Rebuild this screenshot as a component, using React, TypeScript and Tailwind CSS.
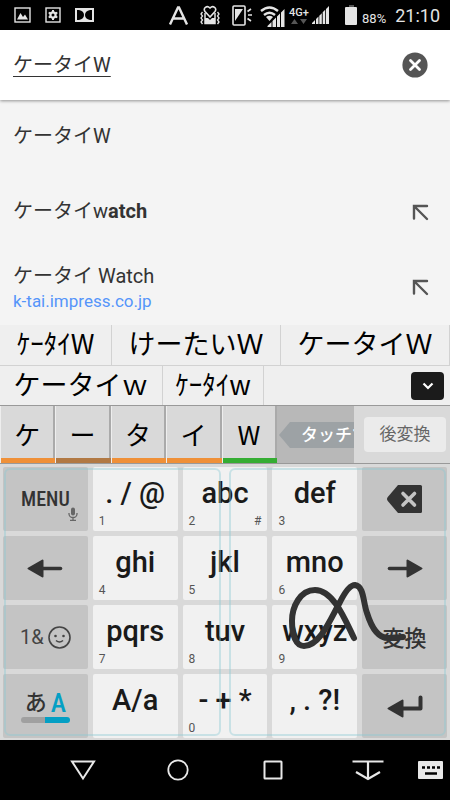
import type { ReactNode } from 'react';

interface Suggestion {
  text: string;
  match?: string;
  url?: string;
}

interface KeyDef {
  label: string;
  hint?: string;
  alt?: string;
}

const suggestions: Suggestion[] = [
  { text: 'ケータイW' },
  { text: 'ケータイw', match: 'atch' },
  { text: 'ケータイ Watch', url: 'k-tai.impress.co.jp' },
];

const segments = [
  { char: 'ケ', bar: 'bg-[#ef9038]' },
  { char: 'ー', bar: 'bg-[#b17944]' },
  { char: 'タ', bar: 'bg-[#ef9038]' },
  { char: 'イ', bar: 'bg-[#ef9038]' },
  { char: 'W', bar: 'bg-[#35ad33]' },
];

const keyRows: KeyDef[][] = [
  [{ label: '. / @', hint: '1' }, { label: 'abc', hint: '2', alt: '#' }, { label: 'def', hint: '3' }],
  [{ label: 'ghi', hint: '4' }, { label: 'jkl', hint: '5' }, { label: 'mno', hint: '6' }],
  [{ label: 'pqrs', hint: '7' }, { label: 'tuv', hint: '8' }, { label: 'wxyz', hint: '9' }],
  [{ label: 'A/a' }, { label: '- + *', hint: '0' }, { label: ', . ?!' }],
];

function StatusBar() {
  return (
    <header className="flex h-[30px] items-center justify-between bg-black pr-[10px] pl-[14px] text-[#e4e4e4]">
      <div className="flex items-center gap-[14px]">
        <svg width="17" height="16" viewBox="0 0 17 16" fill="none">
          <rect x="1" y="1" width="15" height="14" stroke="currentColor" strokeWidth="1.4" />
          <path d="M3 12.500 6.500 6l2.500 4L11 7.500l3 5z" fill="currentColor" />
        </svg>
        <svg width="16" height="16" viewBox="0 0 16 16" fill="none" stroke="currentColor">
          <rect x="1" y="1" width="14" height="14" strokeWidth="1.4" />
          <circle cx="8" cy="8" r="2.600" strokeWidth="2.200" />
          <path d="M8 3v2M8 11v2M3.700 5.500l1.700 1M10.600 9.500l1.700 1M3.700 10.500l1.700-1M10.600 6.500l1.700-1" strokeWidth="2" />
        </svg>
        <svg width="19" height="14" viewBox="0 0 19 14">
          <rect width="19" height="14" fill="currentColor" />
          <path d="M2 2h2q5 1 5 5t-5 5H2zM17 2h-2q-5 1-5 5t5 5h2z" fill="#000" />
        </svg>
      </div>

      <div className="flex items-center">
        <svg width="19" height="19" viewBox="0 0 19 19" fill="none" stroke="currentColor" strokeWidth="2.400">
          <path d="M1 18.500 9 1.500h1L18 18.500M4 12.500h11" />
        </svg>
        <svg className="ml-3" width="20" height="20" viewBox="0 0 20 20" fill="none" stroke="currentColor">
          <path d="M10 12 5 6.500C2.500 3 7 0 10 3c3-3 7.500 0 5 3.500z" strokeWidth="1.600" />
          <path d="M5 8v10.500h10V8" strokeWidth="1.500" />
          <path d="M5 18v-5h3l2 2 2-2h3v5z" fill="currentColor" stroke="none" />
          <path d="M2.500 7 1 9l1.500 2L1 13l1.500 2L1 17l1.500 2M17.500 7 19 9l-1.500 2 1.500 2-1.500 2 1.500 2-1.500 2" strokeWidth="1.300" />
        </svg>
        <svg className="ml-3" width="20" height="21" viewBox="0 0 20 21" fill="none" stroke="currentColor">
          <rect x="1" y="1" width="12" height="19" rx="1" strokeWidth="1.600" />
          <path d="M3 4h8L3 16z" fill="currentColor" stroke="none" />
          <path d="M15.500 6.500 19 4M16 10h4M15.500 13.500 19 16" strokeWidth="1.600" />
        </svg>
        <svg className="ml-2" width="25" height="23" viewBox="0 0 25 23">
          <path d="M1 7q8.500-7 17 0M4 11q5.500-4.500 11 0" fill="none" stroke="currentColor" strokeWidth="2.400" />
          <path d="m6 13 3.500 4 3.500-4q-3.500-2.500-7 0z" fill="currentColor" />
          <path d="M7.500 23v-1l4-4v5zM12.500 17l3.500-3.500V23h-3.500zM17 12.500 20 9.500V23h-3zM21 8.500 24.500 5v18H21z" fill="currentColor" />
        </svg>
        <div className="ml-1 flex w-5 flex-col items-center">
          <span className="text-[11px] leading-[12px] font-medium">4G+</span>
          <svg width="16" height="5" viewBox="0 0 16 5" fill="#555">
            <path d="M0 5 3.500 0 7 5zM9 0h7l-3.500 5z" />
          </svg>
        </div>
        <svg className="ml-[3px]" width="17" height="18" viewBox="0 0 17 18" fill="currentColor">
          <path d="M0 18v-1l3-3v4zM4 13l2.500-2.500V18H4zM7.300 9.700l2.500-2.500V18H7.300zM10.700 6.300l2.500-2.500V18h-2.500zM14 3l3-3v18h-3z" />
        </svg>
        <svg className="ml-4" width="13" height="20" viewBox="0 0 13 20">
          <path d="M4 0h5v3H4z" fill="#555" />
          <rect y="2" width="12" height="18" rx="1" fill="currentColor" />
        </svg>
        <span className="ml-1 pt-2 text-[13px] leading-4">88%</span>
        <span className="ml-[9px] pt-px text-[18px] leading-5">21:10</span>
      </div>
    </header>
  );
}

function SuggestionRow({ text, match, url }: Suggestion) {
  return (
    <li className="flex h-[75px] items-center justify-between pr-[21px] pl-[13px]">
      <a href="#" className={`flex flex-col text-[#333] ${url ? 'pt-px' : 'pb-1'}`}>
        <span className="text-[20px] leading-[26px]">
          {text}
          {match && <b className="font-bold">{match}</b>}
        </span>
        {url && <span className="text-[17px] leading-[24px] text-[#5595fa]">{url}</span>}
      </a>
      {(match || url) && (
        <button aria-label="検索語を入力" className="text-[#555]">
          <svg width="17" height="17" viewBox="0 0 17 17" fill="none" stroke="currentColor" strokeWidth="2.400" strokeLinecap="round">
            <path d="M2 14.500V2h13M2.500 2.500 15 15" />
          </svg>
        </button>
      )}
    </li>
  );
}

function Candidate({ children }: { children: ReactNode }) {
  return (
    <button className="flex items-center justify-center border-r border-[#d2d2d2] pb-1 leading-9 whitespace-nowrap">
      {children}
    </button>
  );
}

function Candidates() {
  return (
    <div className="bg-[#efefef] font-['Noto_Sans_CJK_JP',sans-serif] text-[27px] text-black">
      <div className="grid h-[41px] grid-cols-[112fr_169fr_169fr] border-b border-[#d2d2d2]">
        <Candidate>ｹｰﾀｲW</Candidate>
        <Candidate>けーたいＷ</Candidate>
        <Candidate>ケータイＷ</Candidate>
      </div>
      <div className="grid h-[39px] grid-cols-[163fr_101fr_186fr]">
        <Candidate>ケータイｗ</Candidate>
        <Candidate>ｹｰﾀｲw</Candidate>
        <div className="flex items-center justify-end pr-[6px]">
          <button aria-label="候補を広げる" className="flex h-7 w-[33px] items-center justify-center rounded-sm bg-[#1b1b1b]">
            <svg width="12" height="8" viewBox="0 0 12 8" fill="none" stroke="#fff" strokeWidth="2.200">
              <path d="m1.500 1.500 4.500 4.500 4.500-4.500" />
            </svg>
          </button>
        </div>
      </div>
    </div>
  );
}

function Composition() {
  return (
    <div className="grid h-[59px] grid-cols-[277fr_77fr_96fr] border-y border-[#999] bg-[#b8b8b8]">
      <div className="grid grid-cols-5 font-['Noto_Sans_CJK_JP',sans-serif] text-[26px]">
        {segments.map((s) => (
          <button key={s.char} className="flex flex-col border-l border-[#eee] bg-[#d9d9d9]">
            <span className="flex w-full flex-1 items-center justify-center border-r-2 border-[#aaa] pt-1 leading-[40px]">
              {s.char}
            </span>
            <span className={`h-[5px] w-full ${s.bar}`} />
          </button>
        ))}
      </div>
      <div className="flex min-w-0 items-center overflow-hidden">
        <div className="ml-[2px] flex shrink-0 items-center">
          <svg width="11" height="26" viewBox="0 0 11 26" fill="#9da2a5">
            <path d="M11 0 0 13l11 13z" />
          </svg>
          <span className="h-[26px] w-[100px] bg-[#9da2a5] pl-[11px] text-[17px] leading-[26px] font-medium whitespace-nowrap text-white">
            タッチで
          </span>
        </div>
      </div>
      <div className="flex items-center bg-[#d9d9d9] pr-1 pl-[10px]">
        <button className="h-[35px] w-full rounded-sm bg-[#ebebeb] text-[17px] leading-[35px] text-[#666]">後変換</button>
      </div>
    </div>
  );
}

function CharKey({ label, hint, alt }: KeyDef) {
  return (
    <button className="flex h-16 flex-col rounded-xs bg-[#f1f1f1] px-[6px] pt-[10px]">
      <span className="w-full text-center text-[29px] leading-[32px] font-medium whitespace-nowrap text-[#1a1a1a]">{label}</span>
      <span className="mt-1 flex w-full justify-between text-[12px] leading-4 text-[#555]">
        <span>{hint}</span>
        <span>{alt}</span>
      </span>
    </button>
  );
}

function SideKey({ label, children }: { label: string; children: ReactNode }) {
  return (
    <button aria-label={label} className="flex h-16 items-center justify-center rounded-xs bg-[#c4c4c4] text-[#333]">
      {children}
    </button>
  );
}

const leftKeys = [
  <SideKey key="menu" label="MENU">
    <span className="relative font-['Roboto_Condensed','Liberation_Sans_Narrow',sans-serif] text-[20px] leading-6 font-medium">
      MENU
      <svg className="absolute top-5 -right-2" width="10" height="14" viewBox="0 0 10 14" fill="none" stroke="#666" strokeWidth="1.300">
        <rect x="3" y="0.500" width="4" height="8" rx="2" fill="#666" stroke="none" />
        <path d="M1 6v1a4 3.500 0 0 0 8 0V6M5 10.500V13M2 13.300h6" />
      </svg>
    </span>
  </SideKey>,
  <SideKey key="left" label="左">
    <svg width="36" height="19" viewBox="0 0 36 19" fill="currentColor" stroke="currentColor" strokeLinejoin="round" strokeLinecap="round">
      <path d="M1.500 9.500 15.500 1.500v16z" strokeWidth="2" />
      <path d="M15 9.500h18.500" strokeWidth="3.600" />
    </svg>
  </SideKey>,
  <SideKey key="symbols" label="1&">
    <span className="flex items-center gap-1 text-[#444]">
      <span className="text-[20px] leading-6">1&amp;</span>
      <svg width="23" height="23" viewBox="0 0 23 23" fill="none" stroke="currentColor">
        <circle cx="11.500" cy="11.500" r="10.500" strokeWidth="1.600" />
        <circle cx="7.500" cy="10" r="1.300" fill="currentColor" stroke="none" />
        <circle cx="15.500" cy="10" r="1.300" fill="currentColor" stroke="none" />
        <path d="M8 14.500q3.500 3 7 0" strokeWidth="1.600" />
      </svg>
    </span>
  </SideKey>,
  <SideKey key="lang" label="あA">
    <span className="flex flex-col items-center">
      <span className="flex items-center gap-1 leading-7 font-medium">
        <span className="text-[22px]">あ</span>
        <span className="font-['Roboto_Condensed','Liberation_Sans_Narrow',sans-serif] text-[26px] text-[#049fc4]">A</span>
      </span>
      <span className="flex h-[6px] w-[49px] overflow-hidden rounded-full">
        <span className="flex-1 bg-[#a0a0a0]" />
        <span className="flex-1 bg-[#049fc4]" />
      </span>
    </span>
  </SideKey>,
];

const rightKeys = [
  <SideKey key="delete" label="削除">
    <svg width="36" height="28" viewBox="0 0 36 28">
      <path d="M11 0h22.500q1.500 0 1.500 1.500v25q0 1.500-1.500 1.500H11L.8 16q-1.600-2 0-4z" fill="currentColor" />
      <path d="m16 8.500 11.500 11.500M27.500 8.500 16 20" stroke="#c4c4c4" strokeWidth="3.600" strokeLinecap="round" />
    </svg>
  </SideKey>,
  <SideKey key="right" label="右">
    <svg width="36" height="19" viewBox="0 0 36 19" fill="currentColor" stroke="currentColor" strokeLinejoin="round" strokeLinecap="round">
      <path d="m34.500 9.500-14-8v16z" strokeWidth="2" />
      <path d="M21 9.500H2.500" strokeWidth="3.600" />
    </svg>
  </SideKey>,
  <SideKey key="convert" label="変換">
    <span className="pt-1 text-[22px] leading-7 font-medium">変換</span>
  </SideKey>,
  <SideKey key="enter" label="改行">
    <svg width="36" height="23" viewBox="0 0 36 23" fill="currentColor" stroke="currentColor" strokeLinejoin="round" strokeLinecap="round">
      <path d="M1.500 13.500 15.500 5.500v16z" strokeWidth="2" />
      <path d="M15 13.500h18.500V2.500" fill="none" strokeWidth="4" />
    </svg>
  </SideKey>,
];

function Keyboard() {
  return (
    <div className="relative bg-[#d9d9d9] px-[3px] pt-[3px] pb-[2px]">
      <div className="grid grid-cols-5 gap-[5px]">
        {keyRows.map((row, i) => [
          leftKeys[i],
          ...row.map((k) => <CharKey key={k.label} {...k} />),
          rightKeys[i],
        ])}
      </div>

      {/* Handwriting areas and the current stroke */}
      <div className="pointer-events-none absolute inset-0 flex gap-2 px-1 pt-1 pb-1">
        <div className="flex-1 rounded-md border-2 border-[#8ccbd5]/40" />
        <div className="flex-1 rounded-md border-2 border-[#8ccbd5]/40" />
      </div>
      <svg className="pointer-events-none absolute inset-0 h-full w-full" viewBox="0 0 450 276" fill="none">
        <path
          d="M354 174C346 158 334 126 315 126C300 126 292 143 292 157C292 172 296 182 304 182C320 182 331 154 340 138C345 128 350 121 355 121C364 122 363 138 367 149C371 162 378 174 388 174L403 173"
          stroke="#333"
          strokeWidth="6"
          strokeLinecap="round"
          strokeLinejoin="round"
        />
      </svg>
    </div>
  );
}

function NavBar() {
  return (
    <nav className="grid h-[60px] grid-cols-[35fr_95fr_95fr_95fr_95fr_35fr] items-center justify-items-center bg-black text-[#e8e8e8]">
      <span />
      <button aria-label="戻る">
        <svg width="26" height="21" viewBox="0 0 26 21" fill="none" stroke="currentColor" strokeWidth="2">
          <path d="M2 1.500h22L13 18.500z" />
        </svg>
      </button>
      <button aria-label="ホーム">
        <svg width="22" height="22" viewBox="0 0 22 22" fill="none" stroke="currentColor" strokeWidth="1.800">
          <circle cx="11" cy="11" r="9.700" />
        </svg>
      </button>
      <button aria-label="履歴">
        <svg width="20" height="20" viewBox="0 0 20 20" fill="none" stroke="currentColor" strokeWidth="2">
          <rect x="1.500" y="1.500" width="17" height="17" rx="0.500" />
        </svg>
      </button>
      <button aria-label="閉じる">
        <svg width="32" height="21" viewBox="0 0 32 21" fill="none" stroke="currentColor" strokeWidth="2.200">
          <path d="M.5 1.500h31M16 1.500V19M4 12l12 7 12-7" />
        </svg>
      </button>
      <button aria-label="キーボード切替" className="pr-1">
        <svg width="25" height="18" viewBox="0 0 25 18">
          <rect width="25" height="18" rx="1" fill="currentColor" />
          <path d="M4 6.500h3M9 6.500h3M14 6.500h3M19 6.500h3M7 12.500h12" stroke="#000" strokeWidth="2.400" />
        </svg>
      </button>
    </nav>
  );
}

export default function App() {
  return (
    <div className="flex min-h-screen flex-col bg-[#f4f4f4] font-[Roboto,'Noto_Sans_CJK_JP',sans-serif]">
      <StatusBar />
      <div className="relative flex h-[70px] items-center bg-white pr-[22px] pl-[13px] shadow-[0_1px_3px_rgba(0,0,0,0.4)]">
        <input
          aria-label="検索"
          defaultValue="ケータイW"
          className="min-w-0 flex-1 text-[20px] leading-[26px] text-[#333] underline decoration-1 underline-offset-4 outline-none"
        />
        <button aria-label="消去">
          <svg width="26" height="26" viewBox="0 0 26 26">
            <circle cx="13" cy="13" r="12.600" fill="#555" />
            <path d="m8.500 8.500 9 9M17.500 8.500l-9 9" stroke="#fff" strokeWidth="2.800" strokeLinecap="round" />
          </svg>
        </button>
      </div>
      <ul className="flex-1">
        {suggestions.map((s) => (
          <SuggestionRow key={s.text} {...s} />
        ))}
      </ul>
      <Candidates />
      <Composition />
      <Keyboard />
      <NavBar />
    </div>
  );
}
